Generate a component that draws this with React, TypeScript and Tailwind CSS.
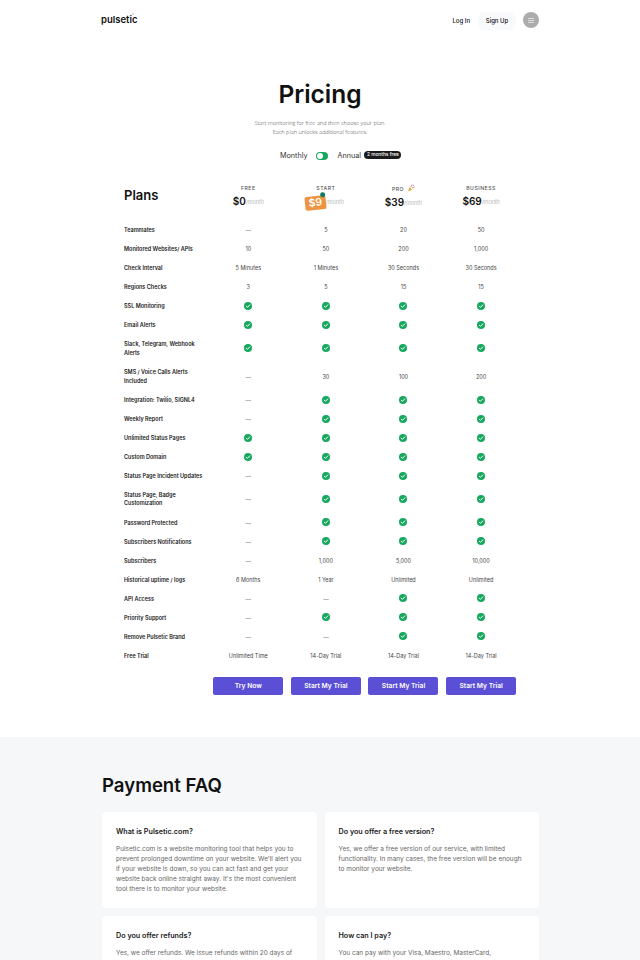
const Check = () => (
  <svg viewBox="0 0 16 16" className="w-[8px] h-[8px] -mt-[1px]">
    <circle cx="8" cy="8" r="8" fill="#16a85d" />
    <path d="M4.4 8.3l2.5 2.4 4.7-5" fill="none" stroke="#fff" strokeWidth="2" strokeLinecap="round" strokeLinejoin="round" />
  </svg>
);

const Y = "check";
const N = "—";

const rows: { label: string; cells: string[]; tall?: boolean }[] = [
  { label: "Teammates", cells: [N, "5", "20", "50"] },
  { label: "Monitored Websites/ APIs", cells: ["10", "50", "200", "1,000"] },
  { label: "Check Interval", cells: ["5 Minutes", "1 Minutes", "30 Seconds", "30 Seconds"] },
  { label: "Regions Checks", cells: ["3", "5", "15", "15"] },
  { label: "SSL Monitoring", cells: [Y, Y, Y, Y] },
  { label: "Email Alerts", cells: [Y, Y, Y, Y] },
  { label: "Slack, Telegram, Webhook Alerts", cells: [Y, Y, Y, Y], tall: true },
  { label: "SMS / Voice Calls Alerts Included", cells: [N, "30", "100", "200"], tall: true },
  { label: "Integration: Twilio, SIGNL4", cells: [N, Y, Y, Y] },
  { label: "Weekly Report", cells: [N, Y, Y, Y] },
  { label: "Unlimited Status Pages", cells: [Y, Y, Y, Y] },
  { label: "Custom Domain", cells: [Y, Y, Y, Y] },
  { label: "Status Page Incident Updates", cells: [N, Y, Y, Y] },
  { label: "Status Page, Badge Customization", cells: [N, Y, Y, Y], tall: true },
  { label: "Password Protected", cells: [N, Y, Y, Y] },
  { label: "Subscribers Notifications", cells: [N, Y, Y, Y] },
  { label: "Subscribers", cells: [N, "1,000", "5,000", "10,000"] },
  { label: "Historical uptime / logs", cells: ["6 Months", "1 Year", "Unlimited", "Unlimited"] },
  { label: "API Access", cells: [N, N, Y, Y] },
  { label: "Priority Support", cells: [N, Y, Y, Y] },
  { label: "Remove Pulsetic Brand", cells: [N, N, Y, Y] },
  { label: "Free Trial", cells: ["Unlimited Time", "14-Day Trial", "14-Day Trial", "14-Day Trial"] },
];

const faqs = [
  {
    q: "What is Pulsetic.com?",
    a: "Pulsetic.com is a website monitoring tool that helps you to prevent prolonged downtime on your website. We'll alert you if your website is down, so you can act fast and get your website back online straight away. It's the most convenient tool there is to monitor your website.",
  },
  {
    q: "Do you offer a free version?",
    a: "Yes, we offer a free version of our service, with limited functionality. In many cases, the free version will be enough to monitor your website.",
  },
  {
    q: "Do you offer refunds?",
    a: "Yes, we offer refunds. We issue refunds within 20 days of",
  },
  {
    q: "How can I pay?",
    a: "You can pay with your Visa, Maestro, MasterCard,",
  },
];

const Month = () => <span className="text-[5.5px] font-light text-[#9a9a9a] mt-[2px]">/month</span>;

const Popper = () => (
  <svg viewBox="0 0 16 16" className="w-[8px] h-[8px] ml-[3px] -mt-[3px]">
    <path d="M2 15l3-9 5 5z" fill="#e9a23b" />
    <path d="M8 6l2-5M10 8l5-2" stroke="#d9694a" strokeWidth="1.5" fill="none" />
    <circle cx="13" cy="2.5" r="1.2" fill="#8a6fd1" />
  </svg>
);

export default function App() {
  return (
    <div className="h-[960px] overflow-hidden bg-white text-[#111] [font-family:Inter,sans-serif]">
      <header className="h-[40px] px-[101px] flex items-center justify-between">
        <div className="relative text-[9.5px] font-semibold">
          pulsetic
          <span className="absolute right-[3px] top-[0px] w-[2px] h-[2px] rounded-full bg-[#bcd9ee]"></span>
        </div>
        <div className="flex items-center">
          <span className="text-[6px] font-medium mr-[8px]">Log In</span>
          <span className="w-[38px] h-[18px] rounded-[6px] bg-[#f9fafb] text-[6px] font-medium flex items-center justify-center mr-[7px] mt-[1px]">Sign Up</span>
          <span className="w-[16px] h-[16px] rounded-full bg-[#acacac] flex flex-col items-center justify-center gap-[1px]">
            <i className="block w-[6px] h-[1px] bg-[#ddd]"></i>
            <i className="block w-[6px] h-[1px] bg-[#ddd]"></i>
            <i className="block w-[6px] h-[1px] bg-[#ddd]"></i>
          </span>
        </div>
      </header>

      <section className="flex flex-col items-center pt-[36px]">
        <h1 className="text-[24.5px] leading-[36px] font-semibold">Pricing</h1>
        <p className="mt-[7px] text-[5.6px] leading-[8.5px] font-light text-[#444] text-center [font-family:'Open_Sans',sans-serif]">
          Start monitoring for free and then choose your plan.
          <br />
          Each plan unlocks additional features.
        </p>
        <div className="mt-[15px] h-[10px] flex items-center text-[7.2px] text-[#333] ml-[1px]">
          <span>Monthly</span>
          <span className="w-[12px] h-[8px] mx-[9px] rounded-full bg-[#16a85d] flex items-center pl-[1px]">
            <i className="block w-[6px] h-[6px] rounded-full bg-white"></i>
          </span>
          <span className="relative">
            Annual
            <span className="absolute left-full top-[0px] ml-[3.5px] h-[8px] px-[2.5px] rounded-full bg-[#1b1b1b] text-white text-[4.8px] whitespace-nowrap font-medium flex items-center">2 months free</span>
          </span>
        </div>
      </section>

      <section className="pl-[124px] mt-[19px]">
        <div className="grid grid-cols-[85.5px_repeat(4,77.6px)] h-[41px]">
          <div className="text-[13px] font-semibold self-center -mt-[9px]">Plans</div>
          <div className="flex flex-col items-center pt-[4px]">
            <span className="text-[5.2px] leading-[8px] tracking-[0.5px] text-[#555] font-medium">FREE</span>
            <span className="flex items-center h-[18px] text-[10px] font-semibold">$0<Month /></span>
          </div>
          <div className="flex flex-col items-center pt-[4px]">
            <span className="text-[5.2px] leading-[8px] tracking-[0.5px] text-[#555] font-medium">START</span>
            <span className="flex items-center h-[18px] -ml-[3px]">
              <span className="relative h-[14px] w-[21px] -rotate-6 rounded-[2px] bg-[#ee9440] text-white text-[10.5px] font-semibold flex items-center justify-center mt-[4px]">
                $9
                <i className="absolute -right-[0px] -top-[3px] w-[5px] h-[5px] rounded-full bg-[#0f7f5f]"></i>
              </span>
              <Month />
            </span>
          </div>
          <div className="flex flex-col items-center pt-[4px]">
            <span className="flex items-center text-[5.2px] leading-[8px] tracking-[0.5px] text-[#555] font-medium mt-[1px]">PRO<Popper /></span>
            <span className="flex items-center h-[18px] text-[10px] font-semibold">$39<Month /></span>
          </div>
          <div className="flex flex-col items-center pt-[4px]">
            <span className="text-[5.2px] leading-[8px] tracking-[0.5px] text-[#555] font-medium">BUSINESS</span>
            <span className="flex items-center h-[18px] text-[10px] font-semibold">$69<Month /></span>
          </div>
        </div>

        {rows.map((row) => (
          <div key={row.label} className={`grid grid-cols-[85.5px_repeat(4,77.6px)] items-center ${row.tall ? "h-[27.75px]" : "h-[19px]"}`}>
            <div className="text-[5.5px] leading-[8.4px] font-semibold text-[#222] pr-[4px]">{row.label}</div>
            {row.cells.map((cell, i) => (
              <div key={i} className="flex justify-center text-[5.5px] text-[#444]">
                {cell === Y ? <Check /> : cell === N ? <span className="text-[#666]">—</span> : cell}
              </div>
            ))}
          </div>
        ))}

        <div className="grid grid-cols-[85.5px_repeat(4,77.6px)] mt-[11.5px]">
          <div></div>
          {["Try Now", "Start My Trial", "Start My Trial", "Start My Trial"].map((t, i) => (
            <div key={i} className="flex justify-center">
              <button className="w-[70px] h-[18.5px] rounded-[2px] bg-[#5b4fd6] text-white text-[6.7px] font-semibold">{t}</button>
            </div>
          ))}
        </div>
      </section>

      <section className="mt-[42px] bg-[#f5f7f9] h-[300px] px-[102px] pt-[35px]">
        <h2 className="text-[18.6px] leading-[26px] font-semibold">Payment FAQ</h2>
        <div className="grid grid-cols-2 gap-[8px] mt-[14px] w-[437px]">
          {faqs.map((f) => (
            <div key={f.q} className="bg-white rounded-[4px] h-[96px] pl-[14px] pr-[12px] pt-[15px]">
              <h3 className="text-[7.2px] leading-[10px] font-semibold text-[#1a1a1a]">{f.q}</h3>
              <p className="mt-[7px] text-[6.47px] leading-[10px] text-[#666]">{f.a}</p>
            </div>
          ))}
        </div>
      </section>
    </div>
  );
}
